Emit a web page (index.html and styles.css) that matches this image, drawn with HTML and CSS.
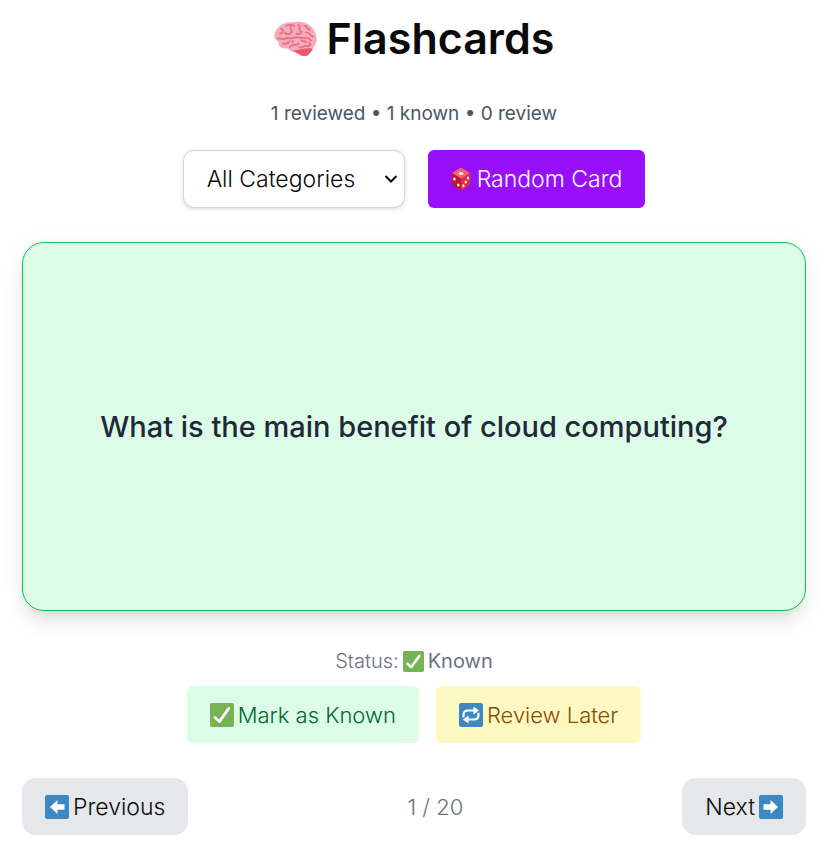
FILE: index.html
```html
<!DOCTYPE html>
<html lang="en">
<head>
<meta charset="utf-8">
<meta name="viewport" content="width=device-width, initial-scale=1">
<title>Flashcards</title>
<link rel="stylesheet" href="styles.css">
</head>
<body>
<svg class="sprite" aria-hidden="true">
  <symbol id="check" viewBox="0 0 24 24">
    <rect width="24" height="24" rx="2" fill="#77b255"/>
    <path d="M5 14.5 9.4 18.6 18.8 5.4" fill="none" stroke="#fff" stroke-width="2.7" stroke-linecap="round" stroke-linejoin="round"/>
  </symbol>
</svg>
<main class="app">
  <h1 class="title">
    <svg class="brain" viewBox="0 0 44 36" aria-hidden="true">
      <path d="M21 29C27 27 34 26 38 27C37 31 35 35 32 36C27 36 24 32 19 31Z" fill="#ea596e"/>
      <path d="M22 1C31-.5 37 4 40 8C44 13 45 20 42 25C40 30 36 29 32 29C27 29 25 32 20 32C15 31 16 28 11 28C5 28 5 24 4 21C-2 18 0 11 4 7C8 2 15 1 22 1Z" fill="#f4abba"/>
      <path d="M19 30.500C26 30 33 27 40 28.500C38 32 35 36 32 36C26 36 24 32 19 30.500Z" fill="#ea596e"/>
      <path d="M7 8C11 9 9 13 6 13M4 18C8 17 9 21 13 17C17 20 22 15 26 17C31 19 34 15 38 20M12 5C15 3 18 4 21 5M17 6C16 9 20 9 17 13M11 12C13 15 16 13 17 13M25 4C28 5 24 9 28 11C27 15 23 13 23 13M31 5C35 5 33 9 37 9M33 12C37 11 36 15 40 16M9 23C13 25 14 22 16 21M16 27C19 22 22 27 25 23M26 27C30 29 31 23 35 26C39 25 37 23 36 22M28 20C31 22 32 20 33 22M19 20V22" fill="none" stroke="#ea6f82" stroke-width="1.8" stroke-linecap="round" stroke-linejoin="round"/>
    </svg>
    <span>Flashcards</span>
  </h1>
  <p class="stats">1 reviewed • 1 known • 0 review</p>
  <div class="row toolbar">
    <div class="picker">
      <select class="select" aria-label="Category"><option>All Categories</option></select>
      <svg class="chevron" viewBox="0 0 14 10" aria-hidden="true"><path d="M1.5 2 7 7.5 12.5 2" fill="none" stroke="#0a0a0a" stroke-width="2"/></svg>
    </div>
    <button class="btn random" type="button">
      <svg class="die" viewBox="0 0 20 24" aria-hidden="true">
        <path d="M10 .5 19 6 10 12 1 6Z" fill="#f4606c"/>
        <path d="M.7 6 10 11.5V23.5L2 18.5Q.7 17.8.7 16Z" fill="#be1931"/>
        <path d="M19.3 6 10 11.5V23.5L18 18.5Q19.3 17.8 19.3 16Z" fill="#dd2e44"/>
        <g fill="#fff"><ellipse cx="10" cy="6.5" rx="2.2" ry="1.5"/><ellipse cx="3.5" cy="12" rx="1.2" ry="1.6"/><ellipse cx="7.3" cy="18" rx="1.2" ry="1.6"/><ellipse cx="17" cy="11" rx="1.1" ry="1.6"/><ellipse cx="14.7" cy="15" rx="1.1" ry="1.5"/><ellipse cx="12.4" cy="18.8" rx="1.1" ry="1.5"/></g>
      </svg>
      <span>Random Card</span>
    </button>
  </div>
  <section class="card"><p class="question">What is the main benefit of cloud computing?</p></section>
  <p class="status"><span>Status:</span><svg class="status-icon" aria-hidden="true"><use href="#check"/></svg><strong>Known</strong></p>
  <div class="row marks">
    <button class="btn known" type="button"><svg class="icon" aria-hidden="true"><use href="#check"/></svg><span>Mark as Known</span></button>
    <button class="btn later" type="button">
      <svg class="icon" viewBox="0 0 24 24" aria-hidden="true"><rect width="24" height="24" rx="2" fill="#3b88c3"/><path d="M4.5 13.500V12Q4.500 7.500 9 7.500H15M19.500 10.500V12Q19.500 16.500 15 16.500H9" fill="none" stroke="#fff" stroke-width="2.2" stroke-linecap="round"/><path d="M14.500 3.500 20 7.500 14.500 11.500ZM9.500 12.500 4 16.500 9.500 20.500Z" fill="#fff"/></svg>
      <span>Review Later</span>
    </button>
  </div>
  <nav class="pager" aria-label="Cards">
    <button class="btn page" type="button"><svg class="icon" viewBox="0 0 24 24" aria-hidden="true"><rect width="24" height="24" rx="2" fill="#3b88c3"/><path d="M12.5 5V9.3H19.5V14.7H12.5V19L5 12Z" fill="#fff"/></svg><span>Previous</span></button>
    <span class="count">1 / 20</span>
    <button class="btn page" type="button"><span>Next</span><svg class="icon" viewBox="0 0 24 24" aria-hidden="true"><rect width="24" height="24" rx="2" fill="#3b88c3"/><path d="M11.5 5V9.3H4.5V14.7H11.5V19L19 12Z" fill="#fff"/></svg></button>
  </nav>
</main>
</body>
</html>
```
FILE: styles.css
```css
* { box-sizing: border-box; }
body {
  margin: 0;
  background: #fff;
  color: #0a0a0a;
  font-family: Inter, "Liberation Sans", sans-serif;
  font-size: 23px;
  line-height: 34px;
}
h1, p { margin: 0; }
.sprite { position: absolute; width: 0; height: 0; }
.app { padding: 11px 23px 11px 22px; }
.title {
  display: flex;
  align-items: center;
  justify-content: center;
  gap: 10px;
  margin-bottom: 35px;
  font-size: 43px;
  font-weight: 600;
  line-height: 54px;
}
.brain { width: 43px; height: 35px; }
.stats {
  margin-bottom: 22px;
  color: #4a5565;
  font-size: 19px;
  line-height: 28px;
  text-align: center;
}
.row { display: flex; justify-content: center; }
.toolbar { gap: 23px; margin-bottom: 34px; }
.marks { gap: 17px; margin-bottom: 35px; font-size: 22px; }
.picker { position: relative; }
.select {
  appearance: none;
  width: 222px;
  height: 58px;
  padding: 0 23px;
  border: 1px solid #d1d5dc;
  border-radius: 11px;
  background: #fff;
  box-shadow: 0 1px 4px rgb(0 0 0 / 14%);
  color: inherit;
  font: inherit;
  font-weight: 300;
}
.chevron {
  position: absolute;
  top: 24px;
  right: 7px;
  width: 14px;
  height: 10px;
  pointer-events: none;
}
.btn {
  display: flex;
  align-items: center;
  justify-content: center;
  gap: 4px;
  height: 57px;
  padding: 0 23px;
  border: 0;
  border-radius: 6px;
  color: inherit;
  font: inherit;
  font-weight: 300;
  white-space: nowrap;
}
.icon { width: 24px; height: 24px; }
.die { width: 20px; height: 24px; margin-right: 2px; }
.random { height: 58px; background: #9810fa; color: #fff; }
.known { background: #dcfce7; color: #016630; }
.later { background: #fef9c2; color: #894b00; }
.page { border-radius: 14px; background: #e5e7eb; }
.card {
  display: flex;
  align-items: center;
  justify-content: center;
  min-height: 369px;
  margin-bottom: 36px;
  padding: 34px;
  border: 1px solid #00c950;
  border-radius: 22px;
  background: #dcfce7;
  box-shadow: 0 14px 21px -4px rgb(0 0 0 / 10%), 0 6px 9px -6px rgb(0 0 0 / 10%), 0 0 26px rgb(0 0 0 / 4%);
}
.question {
  color: #1e2939;
  font-size: 29px;
  font-weight: 500;
  line-height: 40px;
  text-align: center;
}
.status {
  display: flex;
  align-items: center;
  justify-content: center;
  gap: 4px;
  margin-bottom: 11px;
  color: #6a7282;
  font-size: 20px;
  font-weight: 300;
  line-height: 28px;
}
.status strong { font-weight: 400; }
.status-icon { width: 21px; height: 21px; }
.pager { display: flex; align-items: center; justify-content: space-between; }
.count { color: #6a7282; font-size: 22px; font-weight: 300; }
```
